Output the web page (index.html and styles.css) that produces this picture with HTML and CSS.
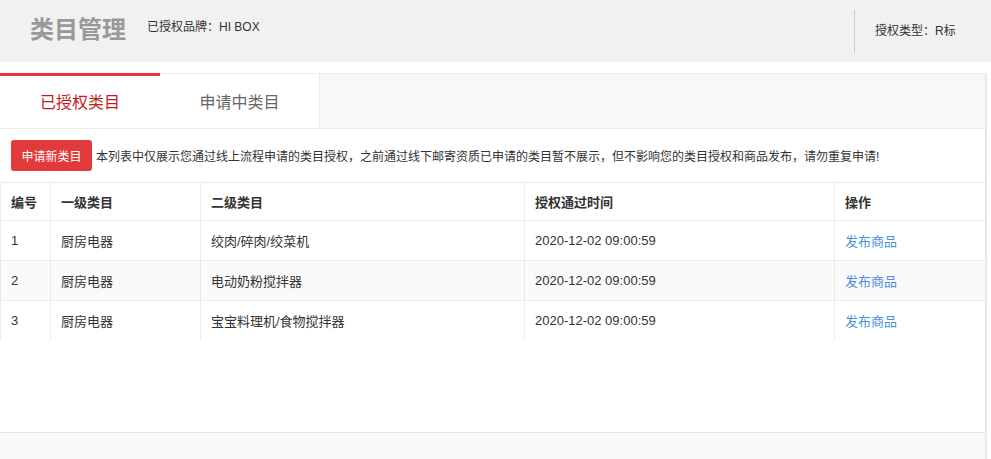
FILE: index.html
```
<!DOCTYPE html>
<html lang="zh-CN">
<head>
  <meta charset="UTF-8">
  <meta name="viewport" content="width=device-width, initial-scale=1">
  <title>类目管理</title>
  <link rel="stylesheet" href="styles.css">
</head>
<body>

  <div class="top-bar">
    <h1>类目管理</h1>
    <span class="brand">已授权品牌：HI BOX</span>
    <div class="auth-type">授权类型：R标</div>
  </div>

  <div class="main">
    <div class="tabs">
      <div class="tab active">已授权类目</div>
      <div class="tab">申请中类目</div>
    </div>

    <div class="panel">
      <div class="notice">
        <button class="btn-apply">申请新类目</button>
        <span>本列表中仅展示您通过线上流程申请的类目授权，之前通过线下邮寄资质已申请的类目暂不展示，但不影响您的类目授权和商品发布，请勿重复申请!</span>
      </div>

      <table class="cat-table">
        <thead>
          <tr>
            <th class="col-no">编号</th>
            <th class="col-first">一级类目</th>
            <th class="col-second">二级类目</th>
            <th class="col-time">授权通过时间</th>
            <th>操作</th>
          </tr>
        </thead>
        <tbody>
          <tr>
            <td>1</td>
            <td>厨房电器</td>
            <td>绞肉/碎肉/绞菜机</td>
            <td>2020-12-02 09:00:59</td>
            <td><a href="#">发布商品</a></td>
          </tr>
          <tr>
            <td>2</td>
            <td>厨房电器</td>
            <td>电动奶粉搅拌器</td>
            <td>2020-12-02 09:00:59</td>
            <td><a href="#">发布商品</a></td>
          </tr>
          <tr>
            <td>3</td>
            <td>厨房电器</td>
            <td>宝宝料理机/食物搅拌器</td>
            <td>2020-12-02 09:00:59</td>
            <td><a href="#">发布商品</a></td>
          </tr>
        </tbody>
      </table>
    </div>

    <div class="footer"></div>
  </div>

</body>
</html>
```

FILE: styles.css
```
body {
  margin: 0;
  font-family: "Liberation Sans", "Noto Sans CJK SC", sans-serif;
  font-size: 12px;
  color: #333;
  background: #fff;
}

.top-bar {
  display: flex;
  align-items: center;
  height: 62px;
  background: #f1f1f1;
  padding-left: 30px;
}

.top-bar h1 {
  margin: 0 21px 0 0;
  font-size: 24px;
  font-weight: bold;
  color: #999;
  position: relative;
  top: -4px;
}

.brand {
  position: relative;
  top: -6px;
}

.auth-type {
  margin-left: auto;
  width: 137px;
  height: 43px;
  line-height: 43px;
  box-sizing: border-box;
  padding-left: 20px;
  border-left: 1px solid #ccc;
}

.main {
  width: 985px;
  margin-top: 11px;
  border-right: 2px solid #e8e8e8;
}

.tabs {
  display: flex;
  height: 54px;
  background: #f8f8f8;
  border-top: 1px solid #ececec;
  border-bottom: 1px solid #ececec;
}

.tab {
  width: 160px;
  box-sizing: border-box;
  text-align: center;
  padding-top: 3px;
  line-height: 51px;
  font-size: 16px;
  color: #666;
  background: #fff;
  border-right: 1px solid #ececec;
}

.tab.active {
  color: #c41a1a;
  border-top: 3px solid #e23a3a;
  padding-top: 1px;
  line-height: 51px;
  margin-top: -1px;
  height: 55px;
  border-right: none;
}

.panel {
  height: 303px;
  background: #fff;
}

.notice {
  display: flex;
  align-items: center;
  height: 53px;
  padding-left: 11px;
  border-bottom: 1px solid #ececec;
}

.btn-apply {
  width: 81px;
  height: 31px;
  margin-right: 4px;
  padding: 0;
  background: #e23a3a;
  color: #fff;
  border: none;
  border-radius: 3px;
  font-family: inherit;
  font-size: 12px;
  cursor: pointer;
}

.cat-table {
  width: 100%;
  border-collapse: collapse;
  font-size: 13px;
}

.cat-table th,
.cat-table td {
  height: 39px;
  padding: 0 10px;
  text-align: left;
  border-left: 1px solid #ececec;
  border-bottom: 1px solid #ececec;
}

.cat-table th {
  height: 37px;
  font-weight: bold;
}

.cat-table tbody tr:last-child td {
  border-bottom: none;
}

.cat-table tbody tr:nth-child(2) {
  background: #fafafa;
}

.col-no { width: 29px; }
.col-first { width: 129px; }
.col-second { width: 303px; }
.col-time { width: 289px; }

.cat-table a {
  color: #4a8fe0;
  text-decoration: none;
}

.footer {
  height: 27px;
  background: #f8f8f8;
  border-top: 1px solid #e5e5e5;
}
```
